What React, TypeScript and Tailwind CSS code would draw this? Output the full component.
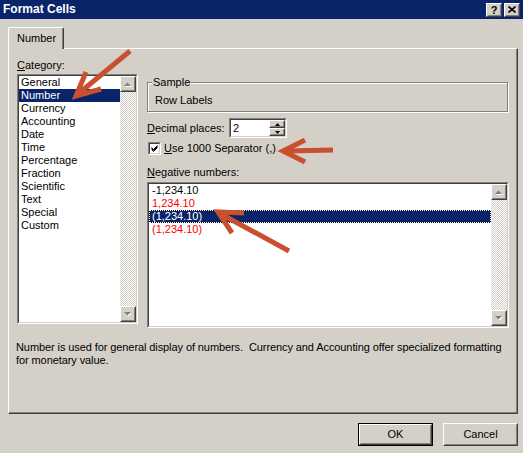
import React from "react";

const categories = [
  "General",
  "Number",
  "Currency",
  "Accounting",
  "Date",
  "Time",
  "Percentage",
  "Fraction",
  "Scientific",
  "Text",
  "Special",
  "Custom",
];

const negatives = [
  { text: "-1,234.10", red: false, selected: false },
  { text: "1,234.10", red: true, selected: false },
  { text: "(1,234.10)", red: false, selected: true },
  { text: "(1,234.10)", red: true, selected: false },
];

function Raised({ className = "", children }: { className?: string; children?: React.ReactNode }) {
  return (
    <div className={`border border-t-white border-l-white border-r-[#404040] border-b-[#404040] bg-[#d4d0c8] ${className}`}>
      <div className="flex h-full w-full items-center justify-center border border-t-[#d4d0c8] border-l-[#d4d0c8] border-r-[#808080] border-b-[#808080]">
        {children}
      </div>
    </div>
  );
}

function Sunken({ className = "", children }: { className?: string; children?: React.ReactNode }) {
  return (
    <div className={`border border-t-[#808080] border-l-[#808080] border-r-white border-b-white ${className}`}>
      <div className="flex h-full w-full border border-t-[#404040] border-l-[#404040] border-r-[#d4d0c8] border-b-[#d4d0c8] bg-white">
        {children}
      </div>
    </div>
  );
}

function Triangle({ up, color = "#808080", shadow = true }: { up: boolean; color?: string; shadow?: boolean }) {
  const pts = up ? "0,4 3.5,0.5 7,4" : "0,0 3.5,3.5 7,0";
  return (
    <svg width="8" height="5" viewBox="0 0 8 5" className="block">
      {shadow && <polygon points={pts} transform="translate(1,1)" fill="#ffffff" />}
      <polygon points={pts} fill={color} />
    </svg>
  );
}

function ScrollBar() {
  return (
    <div className="flex w-[16px] flex-col">
      <Raised className="h-[16px] w-[16px]">
        <Triangle up />
      </Raised>
      <div className="flex-1 [background-image:repeating-conic-gradient(#ffffff_0_25%,#d4d0c8_0_50%)] [background-size:2px_2px]" />
      <Raised className="h-[16px] w-[16px]">
        <Triangle up={false} />
      </Raised>
    </div>
  );
}

export default function App() {
  return (
    <div className="relative h-[453px] w-[523px] overflow-hidden bg-[#d4d0c8] font-['Liberation_Sans',Arial,sans-serif] text-[11px] leading-[13px] text-black">
      {/* title bar */}
      <div className="flex h-[19px] items-center bg-[#0a246a] pl-[3px] pr-[3px]">
        <span className="flex-1 text-[12px] font-bold text-white">Format Cells</span>
        <div className="flex gap-[2px]">
          <Raised className="h-[14px] w-[16px]">
            <span className="text-[11px] font-bold leading-[10px]">?</span>
          </Raised>
          <Raised className="h-[14px] w-[16px]">
            <svg width="8" height="7" viewBox="0 0 8 7" className="block">
              <path d="M0.5 0.5 L7.5 6.5 M7.5 0.5 L0.5 6.5" stroke="#000" strokeWidth="1.6" />
            </svg>
          </Raised>
        </div>
      </div>

      {/* tab strip */}
      <div className="pt-[8px]">
        <div className="relative z-10 ml-[8px] h-[22px] w-[56px] rounded-tl-[2px] rounded-tr-[2px] border-t border-l border-r border-t-white border-l-white border-r-[#404040] bg-[#d4d0c8] pl-[8px] pt-[4px] shadow-[inset_-1px_0_0_#808080]">
          Number
        </div>

        {/* tab panel */}
        <div className="-mt-[1px] ml-[8px] h-[366px] w-[510px] border border-t-white border-l-white border-r-[#404040] border-b-[#404040] shadow-[inset_-1px_-1px_0_#808080]">
          <div className="flex pl-[8px] pt-[10px]">
            {/* category */}
            <div className="flex w-[121px] flex-col">
              <div className="h-[13px]">
                <u>C</u>ategory:
              </div>
              <Sunken className="mt-[2px] h-[250px]">
                <div className="flex-1">
                  {categories.map((c) => (
                    <div
                      key={c}
                      className={`h-[13px] pl-[2px] ${c === "Number" ? "bg-[#0a246a] text-white" : ""}`}
                    >
                      {c}
                    </div>
                  ))}
                </div>
                <ScrollBar />
              </Sunken>
            </div>

            {/* options */}
            <div className="ml-[9px] flex w-[362px] flex-col">
              <div className="relative mt-[23px] h-[30px] w-[361px] border border-[#808080] pl-[7px] pt-[11px] shadow-[inset_1px_1px_0_#ffffff,1px_1px_0_#ffffff]">
                <span className="absolute -top-[7px] left-[4px] bg-[#d4d0c8] px-[1px]">Sample</span>
                Row Labels
              </div>

              <div className="mt-[6px] flex h-[20px] items-center">
                <span className="w-[82px]">
                  <u>D</u>ecimal places:
                </span>
                <Sunken className="h-[20px] w-[58px]">
                  <span className="flex-1 pl-[2px] leading-[16px]">2</span>
                  <div className="flex w-[16px] flex-col">
                    <Raised className="h-[8px] w-[16px]">
                      <svg width="5" height="3" viewBox="0 0 5 3" className="block">
                        <polygon points="0,3 2.5,0 5,3" fill="#000" />
                      </svg>
                    </Raised>
                    <Raised className="h-[8px] w-[16px]">
                      <svg width="5" height="3" viewBox="0 0 5 3" className="block">
                        <polygon points="0,0 2.5,3 5,0" fill="#000" />
                      </svg>
                    </Raised>
                  </div>
                </Sunken>
              </div>

              <div className="mt-[4px] flex h-[13px] items-center">
                <Sunken className="ml-[1px] h-[13px] w-[13px]">
                  <svg width="9" height="9" viewBox="0 0 9 9" className="block">
                    <path d="M1.5 3.5 L3.5 5.5 L7.5 1.5 M1.5 4.5 L3.5 6.5 L7.5 2.5 M1.5 5.5 L3.5 7.5 L7.5 3.5" stroke="#000" strokeWidth="1" fill="none" />
                  </svg>
                </Sunken>
                <span className="ml-[3px]">
                  <u>U</u>se 1000 Separator (,)
                </span>
              </div>

              <div className="mt-[11px] h-[13px]">
                <u>N</u>egative numbers:
              </div>
              <Sunken className="mt-[3px] h-[146px]">
                <div className="flex-1">
                  {negatives.map((n, i) => (
                    <div
                      key={i}
                      className={`h-[13px] pl-[3px] ${
                        n.selected
                          ? "bg-[#0a246a] text-white shadow-[inset_0_0_0_1px_#000] outline outline-1 -outline-offset-1 outline-dotted outline-white"
                          : n.red
                          ? "text-[#ff0000]"
                          : ""
                      }`}
                    >
                      {n.text}
                    </div>
                  ))}
                </div>
                <ScrollBar />
              </Sunken>
            </div>
          </div>

          <p className="ml-[7px] mt-[13px] tracking-[-0.09px]">
            Number is used for general display of numbers.{"\u00a0 "}Currency and Accounting offer specialized formatting
            <br />
            for monetary value.
          </p>
        </div>

        {/* buttons */}
        <div className="mt-[9px] flex justify-end gap-[10px] pr-[5px]">
          <div className="h-[23px] w-[75px] border border-black">
            <Raised className="h-full w-full">OK</Raised>
          </div>
          <Raised className="h-[23px] w-[75px]">Cancel</Raised>
        </div>
      </div>

      {/* red annotation arrows */}
      <svg className="pointer-events-none absolute left-0 top-0" width="523" height="453" viewBox="0 0 523 453">
        <g stroke="#c9502f" strokeWidth="5" fill="none" strokeLinejoin="miter">
          <path d="M130 51 L78 94" />
          <path d="M86 72 L76 96 L101 89" />
          <path d="M333 150 L285 151" />
          <path d="M305 140 L283 151 L305 162" />
          <path d="M289 251 L221 214" />
          <path d="M244 213 L218 212 L232 233" />
        </g>
      </svg>
    </div>
  );
}
